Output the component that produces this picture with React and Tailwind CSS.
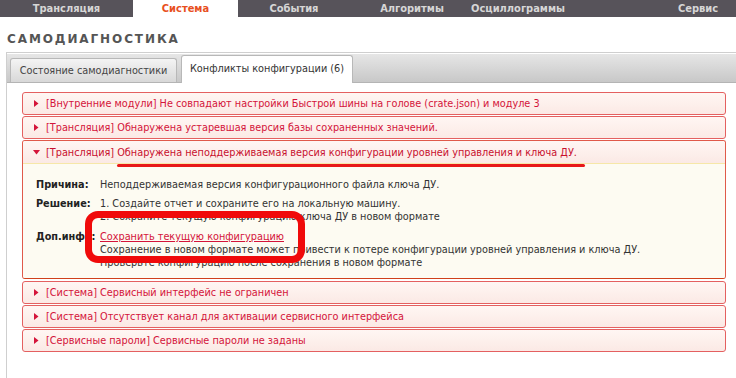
import React from "react";

const navTabs = [
  { label: "Трансляция", w: "w-[133px]" },
  { label: "Система", w: "w-[105px]", active: true },
  { label: "События", w: "w-[112px]" },
  { label: "Алгоритмы", w: "w-[124px]" },
  { label: "Осциллограммы", w: "w-[88px]" },
  { label: "", w: "w-[98px]" },
  { label: "Сервис", w: "w-[76px]" },
];

function Triangle({ down }) {
  return down ? (
    <svg width="7" height="5" viewBox="0 0 7 5" className="shrink-0">
      <polygon points="0,0 7,0 3.5,4.5" fill="#d4143a" />
    </svg>
  ) : (
    <svg width="5" height="7" viewBox="0 0 5 7" className="shrink-0">
      <polygon points="0,0 4.5,3.5 0,7" fill="#d4143a" />
    </svg>
  );
}

function Row({ tag, text }) {
  return (
    <div className="h-[23px] border border-[#e46060] rounded-[3px] bg-gradient-to-b from-[#fff6f3] via-[#fdf0ec] to-[#fbe9e5] flex items-center pl-[11px] gap-[7px] text-[#d4143a]">
      <Triangle />
      <span className="whitespace-nowrap">
        [{tag}] {text}
      </span>
    </div>
  );
}

export default function App() {
  return (
    <div className="w-[736px] h-[378px] bg-white overflow-hidden relative font-['DejaVu_Sans_Condensed','DejaVu_Sans',sans-serif] text-[10.8px] leading-[13px]">
      {/* top navigation */}
      <div className="flex h-[17px] bg-[#57535a]">
        {navTabs.map((t, i) => (
          <div
            key={i}
            className={`${t.w} shrink-0 flex items-center justify-center font-bold text-[11px] ${
              t.active ? "bg-white text-[#e8501e]" : "text-[#d6d6d6]"
            }`}
          >
            {t.label}
          </div>
        ))}
      </div>

      {/* heading */}
      <div className="pl-[7px] pt-[15px] h-[35px] font-bold font-['DejaVu_Sans',sans-serif] text-[12px] leading-[15px] tracking-[1.9px] text-[#555555]">
        САМОДИАГНОСТИКА
      </div>

      {/* tabs panel */}
      <div className="ml-[6px] border-l border-t border-[#cfcfcf] h-[400px]">
        <div className="h-[30px] border-t border-white border-b border-b-[#b4b4b4] bg-gradient-to-b from-[#e6e6e6] to-[#c8c8c8] flex items-end pl-[3px] gap-[4px]">
          <div className="h-[24px] w-[167px] justify-center flex items-center border border-[#b8b8b8] border-b-0 rounded-t-[3px] bg-gradient-to-b from-[#f4f4f4] to-[#d8d8d8] text-[#444] whitespace-nowrap">
            Состояние самодиагностики
          </div>
          <div className="h-[28px] w-[172px] justify-center -mb-[1px] pb-[2px] flex items-center border border-[#b8b8b8] border-b-0 rounded-t-[3px] bg-white text-[#333] whitespace-nowrap">
            Конфликты конфигурации (6)
          </div>
        </div>

        <div className="pl-[15px] pr-[10px] pt-[9px] flex flex-col gap-[1px]">
          <Row tag="Внутренние модули" text="Не совпадают настройки Быстрой шины на голове (crate.json) и модуле 3" />
          <Row tag="Трансляция" text="Обнаружена устаревшая версия базы сохраненных значений." />

          {/* expanded */}
          <div className="border border-[#e05a4a] border-b-[#d0401c] rounded-[3px] overflow-hidden relative">
            <div className="h-[23px] bg-gradient-to-b from-[#fff6f3] via-[#fdf0ec] to-[#fbe9e5] flex items-center pl-[10px] gap-[6px] text-[#c8102e] border-b border-[#f6e7a8]">
              <Triangle down />
              <span className="whitespace-nowrap">
                [Трансляция] Обнаружена неподдерживаемая версия конфигурации уровней управления и ключа ДУ.
              </span>
            </div>
            <div className="bg-[#fdfbf2] h-[114px] pt-[14px] pl-[13px] text-[#333]">
              <div className="flex">
                <div className="w-[64px] shrink-0 font-bold text-[#222]">Причина:</div>
                <div>Неподдерживаемая версия конфигурационного файла ключа ДУ.</div>
              </div>
              <div className="flex mt-[6px]">
                <div className="w-[64px] shrink-0 font-bold text-[#222]">Решение:</div>
                <div>
                  <div>1. Создайте отчет и сохраните его на локальную машину.</div>
                  <div>2. Сохраните текущую конфигурацию ключа ДУ в новом формате</div>
                </div>
              </div>
              <div className="flex mt-[7px]">
                <div className="w-[64px] shrink-0 font-bold text-[#222] whitespace-nowrap">Доп.инфо:</div>
                <div>
                  <div className="text-[#d4143a] underline">Сохранить текущую конфигурацию</div>
                  <div>Сохранение в новом формате может привести к потере конфигурации уровней управления и ключа ДУ.</div>
                  <div>Проверьте конфигурацию после сохранения в новом формате</div>
                </div>
              </div>
            </div>
          </div>

          <div className="mt-[1px] flex flex-col gap-[1px]">
            <Row tag="Система" text="Сервисный интерфейс не ограничен" />
            <Row tag="Система" text="Отсутствует канал для активации сервисного интерфейса" />
            <Row tag="Сервисные пароли" text="Сервисные пароли не заданы" />
          </div>
        </div>
      </div>

      {/* annotations */}
      <div className="absolute left-[117px] top-[164px] w-[468px] h-[3px] bg-[#e81818] rounded-full" />
      <div className="absolute left-[85px] top-[211px] w-[220px] h-[52px] border-[7px] border-[#f00a0a] rounded-[13px]" />
    </div>
  );
}
